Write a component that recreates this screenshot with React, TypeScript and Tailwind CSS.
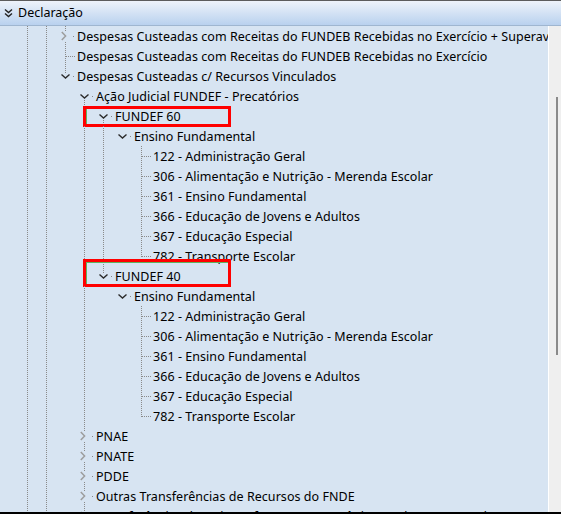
import React from "react";

type Kind = "open" | "closed" | "leaf";
type Row = {
  lvl: number;
  kind: Kind;
  text: string;
  guides: number[]; // columns (< lvl) with full vertical line
  up?: boolean; // own cell: segment above
  down?: boolean; // own cell: segment below
  box?: "a" | "b";
};

const G01 = [0, 1];
const G013 = [0, 1, 3];
const G0134 = [0, 1, 3, 4];

const rows: Row[] = [
  { lvl: 2, kind: "closed", text: "Despesas Custeadas com Receitas do FUNDEB Recebidas no Exercício + Superavit", guides: G01, up: true, down: true },
  { lvl: 2, kind: "leaf", text: "Despesas Custeadas com Receitas do FUNDEB Recebidas no Exercício", guides: G01, up: true, down: true },
  { lvl: 2, kind: "open", text: "Despesas Custeadas c/ Recursos Vinculados", guides: G01, up: true },
  { lvl: 3, kind: "open", text: "Ação Judicial FUNDEF - Precatórios", guides: G01, down: true },
  { lvl: 4, kind: "open", text: "FUNDEF 60", guides: G013, down: true, box: "a" },
  { lvl: 5, kind: "open", text: "Ensino Fundamental", guides: G0134 },
  { lvl: 6, kind: "leaf", text: "122 - Administração Geral", guides: G0134, up: true, down: true },
  { lvl: 6, kind: "leaf", text: "306 - Alimentação e Nutrição - Merenda Escolar", guides: G0134, up: true, down: true },
  { lvl: 6, kind: "leaf", text: "361 - Ensino Fundamental", guides: G0134, up: true, down: true },
  { lvl: 6, kind: "leaf", text: "366 - Educação de Jovens e Adultos", guides: G0134, up: true, down: true },
  { lvl: 6, kind: "leaf", text: "367 - Educação Especial", guides: G0134, up: true, down: true },
  { lvl: 6, kind: "leaf", text: "782 - Transporte Escolar", guides: G0134, up: true },
  { lvl: 4, kind: "open", text: "FUNDEF 40", guides: G013, up: true, box: "b" },
  { lvl: 5, kind: "open", text: "Ensino Fundamental", guides: G013 },
  { lvl: 6, kind: "leaf", text: "122 - Administração Geral", guides: G013, up: true, down: true },
  { lvl: 6, kind: "leaf", text: "306 - Alimentação e Nutrição - Merenda Escolar", guides: G013, up: true, down: true },
  { lvl: 6, kind: "leaf", text: "361 - Ensino Fundamental", guides: G013, up: true, down: true },
  { lvl: 6, kind: "leaf", text: "366 - Educação de Jovens e Adultos", guides: G013, up: true, down: true },
  { lvl: 6, kind: "leaf", text: "367 - Educação Especial", guides: G013, up: true, down: true },
  { lvl: 6, kind: "leaf", text: "782 - Transporte Escolar", guides: G013, up: true },
  { lvl: 3, kind: "closed", text: "PNAE", guides: G01, up: true, down: true },
  { lvl: 3, kind: "closed", text: "PNATE", guides: G01, up: true, down: true },
  { lvl: 3, kind: "closed", text: "PDDE", guides: G01, up: true, down: true },
  { lvl: 3, kind: "closed", text: "Outras Transferências de Recursos do FNDE", guides: G01, up: true, down: true },
  { lvl: 3, kind: "closed", text: "Transferências da União referentes a Convênios ou de Contratos de Repasse", guides: G01, up: true, down: true },
];

const DOT = "#8a8a8a";

function Cell({ children }: { children?: React.ReactNode }) {
  return (
    <svg width="19" height="20" viewBox="0 0 19 20" className="shrink-0 block" shapeRendering="crispEdges">
      {children}
    </svg>
  );
}

function VLine({ y1, y2 }: { y1: number; y2: number }) {
  return <line x1="9.5" y1={y1} x2="9.5" y2={y2} stroke={DOT} strokeWidth="1" strokeDasharray="1 1" />;
}

function OwnCell({ r }: { r: Row }) {
  if (r.kind === "leaf") {
    return (
      <Cell>
        <VLine y1={r.up ? 0 : 10} y2={r.down ? 20 : 11} />
        <line x1="10" y1="10.5" x2="19" y2="10.5" stroke={DOT} strokeWidth="1" strokeDasharray="1 1" />
      </Cell>
    );
  }
  return (
    <Cell>
      {r.up && <VLine y1={0} y2={r.kind === "open" ? 7 : 5} />}
      {r.down && <VLine y1={r.kind === "open" ? 14 : 16} y2={20} />}
      <rect x="17" y="10" width="1" height="1" fill={DOT} />
      {r.kind === "open" ? (
        <path d="M5.5 8.5 L9.5 12 L13.5 8.5" fill="none" stroke="#2b2b2b" strokeWidth="1.4" shapeRendering="geometricPrecision" />
      ) : (
        <path d="M5.8 6 L9.6 10 L5.8 14" fill="none" stroke="#9d9d9d" strokeWidth="1.5" shapeRendering="geometricPrecision" />
      )}
    </Cell>
  );
}

function TreeRow({ r }: { r: Row }) {
  const cells = [];
  for (let i = 0; i < r.lvl; i++) {
    cells.push(
      <Cell key={i}>{r.guides.includes(i) && <VLine y1={0} y2={20} />}</Cell>
    );
  }
  return (
    <div className="relative flex h-[20px] items-start pl-[18px] shrink-0">
      {cells}
      <OwnCell r={r} />
      <span className="ml-[2px] h-[20px] whitespace-nowrap pt-[1px] text-[12.5px] leading-[20px] tracking-[0.05px] text-black">
        {r.text}
      </span>
      {r.box === "a" && (
        <div className="pointer-events-none absolute left-[83px] top-0 h-[21px] w-[148px] border-[3px] border-[#ff0000] shadow-[inset_1px_0_0_#5fb35f]" />
      )}
      {r.box === "b" && (
        <div className="pointer-events-none absolute left-[83px] top-[-7px] h-[28px] w-[148px] border-[3px] border-[#ff0000] shadow-[inset_1px_1px_0_#5fb35f]" />
      )}
    </div>
  );
}

export default function App() {
  return (
    <div
      className="flex h-[514px] w-[561px] flex-col overflow-hidden bg-[#d7e4f2]"
      style={{ fontFamily: '"Noto Sans", "Open Sans", sans-serif' }}
    >
      <div className="flex h-[26px] shrink-0 items-center border-t border-b border-t-[#5c5c5c] border-b-[#9fb6d0] bg-gradient-to-b from-[#eef3fa] to-[#b9d1ee] pl-[4px]">
        <svg width="9" height="10" viewBox="0 0 9 10" className="block">
          <path d="M1 1.5 L4.5 4.5 L8 1.5 M1 5.5 L4.5 8.5 L8 5.5" fill="none" stroke="#222" strokeWidth="1.4" />
        </svg>
        <span className="ml-[5px] text-[12.5px] text-black">Declaração</span>
      </div>
      <div className="flex min-h-0 flex-1">
        <div className="flex min-w-0 flex-1 flex-col overflow-hidden bg-[#d7e4f2]">
          {rows.map((r, i) => (
            <TreeRow key={i} r={r} />
          ))}
        </div>
        <div className="flex w-[13px] shrink-0 border-l border-white bg-[#efefef] pl-[7px] pt-[71px]">
          <div className="h-[258px] w-[2px] bg-[#8a8a8a]" />
        </div>
      </div>
      <div className="h-[2px] shrink-0 bg-black" />
    </div>
  );
}
